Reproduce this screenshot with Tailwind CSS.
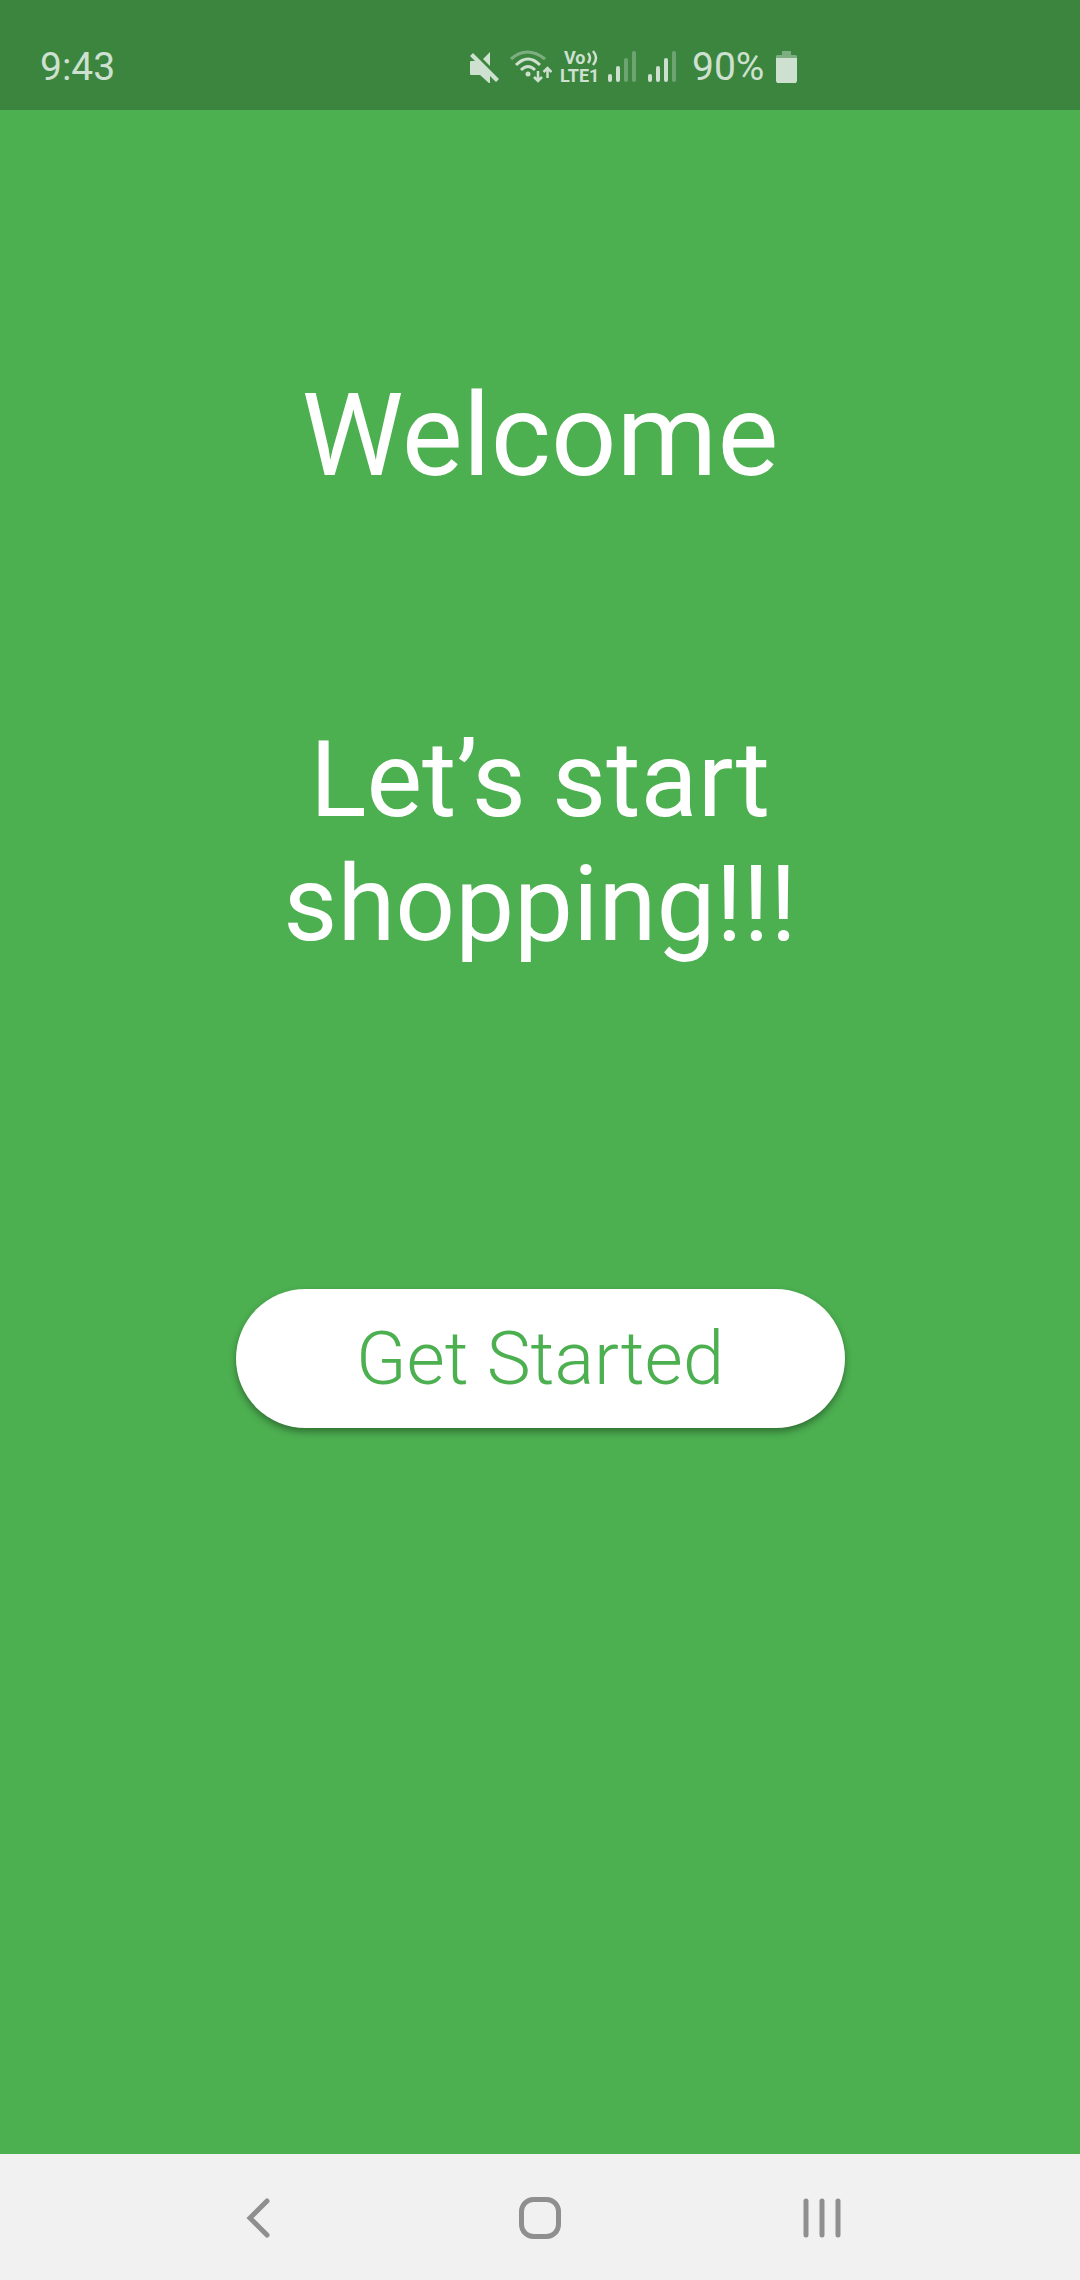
<!DOCTYPE html>
<html lang="en">
<head>
<meta charset="utf-8">
<meta name="viewport" content="width=device-width, initial-scale=1">
<title>Welcome</title>
<script src="https://cdn.jsdelivr.net/npm/@tailwindcss/browser@4"></script>
</head>
<body class="flex min-h-screen flex-col bg-[#4caf50] font-['Roboto',sans-serif] text-white">
  <header class="flex h-[110px] items-end bg-[#3b853f] pb-5 text-[39px] leading-[46px] text-[#cee0cf]">
    <time class="flex-1 pl-10">9:43</time>
    <div class="flex flex-1 items-center">
      <div class="-ml-[92px] flex items-center">
        <svg class="h-8 w-8" viewBox="0 0 32 32" fill="currentColor" aria-label="Muted"><path d="M3 10h4L2 5l3-3 26 26-3 3-6-6v8L12 24H3q-1 0-1-1V11q0-1 1-1zM22 1v14l-7-7z"/></svg>
        <svg class="ml-2 h-10 w-11" viewBox="0 0 44 40" fill="none" stroke="currentColor" aria-label="Wi-Fi"><g stroke-width="3"><path d="M3 12q16-14 34 0" opacity=".45"/><path d="M8 18q12-12 24 0M13 23q7-7 14 0"/></g><circle cx="20" cy="27" r="2.500" fill="currentColor" stroke="none"/><path d="M30 24v10m-4-4 4 4 4-4M39.500 31V21m-4 4 4-4 4 4" stroke-width="2.500"/></svg>
        <div class="ml-2 flex w-10 flex-col text-[18px] leading-[18px] font-bold">
          <span class="flex items-center gap-px pl-1">Vo<svg class="h-4 w-3" viewBox="0 0 12 16" fill="none" stroke="currentColor" stroke-width="2.500"><path d="M1 3q4 5 0 10M6 1q6 7 0 14"/></svg></span>
          <span>LTE1</span>
        </div>
        <svg class="ml-2 h-8 w-7" viewBox="0 0 28 32" fill="currentColor" aria-label="SIM 1 signal"><rect y="23" width="4" height="8" rx="2"/><rect x="8" y="15" width="4" height="16" rx="2"/><g opacity=".35"><rect x="16" y="7" width="4" height="24" rx="2"/><rect x="24" width="4" height="31" rx="2"/></g></svg>
        <svg class="ml-3 h-8 w-7" viewBox="0 0 28 32" fill="currentColor" aria-label="SIM 2 signal"><rect y="23" width="4" height="8" rx="2"/><rect x="8" y="15" width="4" height="16" rx="2"/><rect x="16" y="7" width="4" height="24" rx="2"/><rect x="24" width="4" height="31" rx="2" opacity=".35"/></svg>
        <span class="ml-4">90%</span>
        <svg class="ml-3 h-8 w-[21px]" viewBox="0 0 21 32" fill="currentColor" aria-label="Battery"><path d="M6 0h9v4h5l1 1v2H0V5l1-1h5z" opacity=".45"/><path d="M0 7h21v23l-1 2H1l-1-2z"/></svg>
      </div>
    </div>
  </header>
  <main class="flex flex-1 flex-col items-center pt-[258px] text-center">
    <h1 class="text-[115px] leading-[136px]">Welcome</h1>
    <p class="mt-[215px] w-[560px] text-[105px] leading-[124px]">Let’s start shopping!!!</p>
    <button type="button" class="mt-[322px] h-[139px] w-[609px] rounded-full bg-white text-[74px] font-light text-[#4caf50] shadow-[0_4px_7px_rgba(0,0,0,0.35)]">Get Started</button>
  </main>
  <nav class="flex h-[126px] items-center justify-center gap-[236px] bg-[#f1f1f1] pt-[2px] text-[#8f8f8f]" aria-label="System">
    <button type="button" aria-label="Back"><svg class="h-[46px] w-[46px]" viewBox="0 0 46 46" fill="none" stroke="currentColor" stroke-width="5" stroke-linecap="round"><path d="M32 6 15 23l17 17"/></svg></button>
    <button type="button" aria-label="Home"><svg class="h-[46px] w-[46px]" viewBox="0 0 46 46" fill="none" stroke="currentColor" stroke-width="5"><rect x="4.500" y="4.500" width="37" height="37" rx="12"/></svg></button>
    <button type="button" aria-label="Recents"><svg class="h-[46px] w-[46px]" viewBox="0 0 46 46" fill="none" stroke="currentColor" stroke-width="5" stroke-linecap="round"><path d="M7 6v34M23 6v34M39 6v34"/></svg></button>
  </nav>
</body>
</html>
